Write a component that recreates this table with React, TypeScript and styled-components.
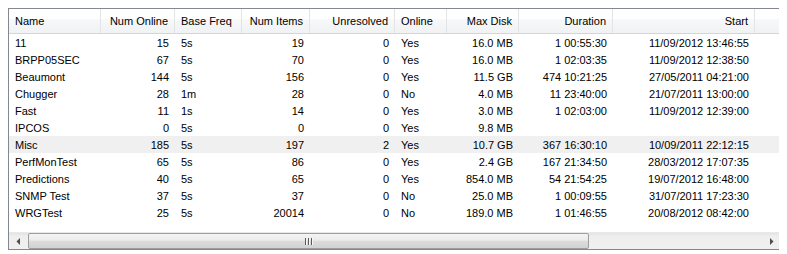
import React from "react"
import styled, { createGlobalStyle } from "styled-components"

const GlobalStyle = createGlobalStyle`
  body {
    margin: 8px;
    background: #ffffff;
    font-family: "Liberation Sans", Arial, sans-serif;
    font-size: 11px;
    color: #000;
  }
`

type Align = "left" | "right"

const columns: { label: string; align: Align }[] = [
  { label: "Name", align: "left" },
  { label: "Num Online", align: "right" },
  { label: "Base Freq", align: "left" },
  { label: "Num Items", align: "right" },
  { label: "Unresolved", align: "right" },
  { label: "Online", align: "left" },
  { label: "Max Disk", align: "right" },
  { label: "Duration", align: "right" },
  { label: "Start", align: "right" },
]

const rows: string[][] = [
  ["11", "15", "5s", "19", "0", "Yes", "16.0 MB", "1 00:55:30", "11/09/2012 13:46:55"],
  ["BRPP05SEC", "67", "5s", "70", "0", "Yes", "16.0 MB", "1 02:03:35", "11/09/2012 12:38:50"],
  ["Beaumont", "144", "5s", "156", "0", "Yes", "11.5 GB", "474 10:21:25", "27/05/2011 04:21:00"],
  ["Chugger", "28", "1m", "28", "0", "No", "4.0 MB", "11 23:40:00", "21/07/2011 13:00:00"],
  ["Fast", "11", "1s", "14", "0", "Yes", "3.0 MB", "1 02:03:00", "11/09/2012 12:39:00"],
  ["IPCOS", "0", "5s", "0", "0", "Yes", "9.8 MB", "", ""],
  ["Misc", "185", "5s", "197", "2", "Yes", "10.7 GB", "367 16:30:10", "10/09/2011 22:12:15"],
  ["PerfMonTest", "65", "5s", "86", "0", "Yes", "2.4 GB", "167 21:34:50", "28/03/2012 17:07:35"],
  ["Predictions", "40", "5s", "65", "0", "Yes", "854.0 MB", "54 21:54:25", "19/07/2012 16:48:00"],
  ["SNMP Test", "37", "5s", "37", "0", "No", "25.0 MB", "1 00:09:55", "31/07/2011 17:23:30"],
  ["WRGTest", "25", "5s", "20014", "0", "No", "189.0 MB", "1 01:46:55", "20/08/2012 08:42:00"],
]

const gridColumns = "92px 74px 67px 68px 85px 52px 72px 94px 142px 1fr"

const ListView = styled.div`
  width: 773px;
  height: 242px;
  box-sizing: border-box;
  border: 1px solid #828790;
  display: flex;
  flex-direction: column;
  background: #fff;
`

const Header = styled.div`
  display: grid;
  grid-template-columns: ${gridColumns};
  height: 25px;
  box-sizing: border-box;
  border-bottom: 1px solid #d5d5d5;
  background: linear-gradient(
    to bottom,
    #ffffff 0%,
    #ffffff 42%,
    #f7f8f9 42%,
    #f1f2f3 100%
  );
`

const HeaderCell = styled.div<{ $align: Align }>`
  display: flex;
  align-items: center;
  justify-content: ${p => (p.$align === "right" ? "flex-end" : "flex-start")};
  padding: 0 ${p => (p.$align === "right" ? "6px" : "0")} 1px
    ${p => (p.$align === "right" ? "0" : "6px")};
  border-right: 1px solid #e3e4e6;
  white-space: nowrap;
  overflow: hidden;
`

const Body = styled.div`
  flex: 1;
  display: flex;
  flex-direction: column;
`

const Row = styled.div<{ $selected?: boolean }>`
  display: grid;
  grid-template-columns: ${gridColumns};
  height: 17px;
  background: ${p => (p.$selected ? "#f0f0f0" : "transparent")};
`

const Cell = styled.div<{ $align: Align }>`
  display: flex;
  align-items: center;
  justify-content: ${p => (p.$align === "right" ? "flex-end" : "flex-start")};
  padding: 0 ${p => (p.$align === "right" ? "6px" : "0")} 0
    ${p => (p.$align === "right" ? "0" : "6px")};
  white-space: nowrap;
  overflow: hidden;
`

const ScrollBar = styled.div`
  height: 17px;
  display: flex;
  background: linear-gradient(to bottom, #e3e3e3 0%, #eeeeee 20%, #f0f0f0 100%);
  border-top: 1px solid #e8e8e8;
  box-sizing: border-box;
`

const ArrowButton = styled.div`
  width: 17px;
  display: flex;
  align-items: center;
  justify-content: center;
`

const Track = styled.div`
  flex: 1;
  display: flex;
  align-items: stretch;
  padding: 0 2px 0 2px;
`

const Thumb = styled.div`
  width: 561px;
  box-sizing: border-box;
  border: 1px solid #9d9d9d;
  border-radius: 2px;
  background: linear-gradient(
    to bottom,
    #f4f4f4 0%,
    #ebebeb 45%,
    #dcdcdc 50%,
    #d2d2d2 100%
  );
  display: flex;
  align-items: center;
  justify-content: center;
`

const Grip = styled.div`
  display: flex;
  gap: 2px;

  span {
    width: 1px;
    height: 7px;
    background: #5a5a5a;
    box-shadow: 1px 0 0 #f6f6f6;
  }
`

function Arrow({ dir }: { dir: "left" | "right" }) {
  return (
    <svg width="4" height="7" viewBox="0 0 4 7">
      {dir === "left" ? (
        <polygon points="4,0 4,7 0.5,3.5" fill="#4d4d4d" />
      ) : (
        <polygon points="0,0 0,7 3.5,3.5" fill="#4d4d4d" />
      )}
    </svg>
  )
}

export default function App() {
  return (
    <>
      <GlobalStyle />
      <ListView>
        <Header>
          {columns.map(c => (
            <HeaderCell key={c.label} $align={c.align}>
              {c.label}
            </HeaderCell>
          ))}
          <HeaderCell $align="left" />
        </Header>
        <Body>
          {rows.map(r => (
            <Row key={r[0]} $selected={r[0] === "Misc"}>
              {r.map((v, i) => (
                <Cell key={i} $align={columns[i].align}>
                  {v}
                </Cell>
              ))}
              <Cell $align="left" />
            </Row>
          ))}
        </Body>
        <ScrollBar>
          <ArrowButton>
            <Arrow dir="left" />
          </ArrowButton>
          <Track>
            <Thumb>
              <Grip>
                <span />
                <span />
                <span />
              </Grip>
            </Thumb>
          </Track>
          <ArrowButton>
            <Arrow dir="right" />
          </ArrowButton>
        </ScrollBar>
      </ListView>
    </>
  )
}
